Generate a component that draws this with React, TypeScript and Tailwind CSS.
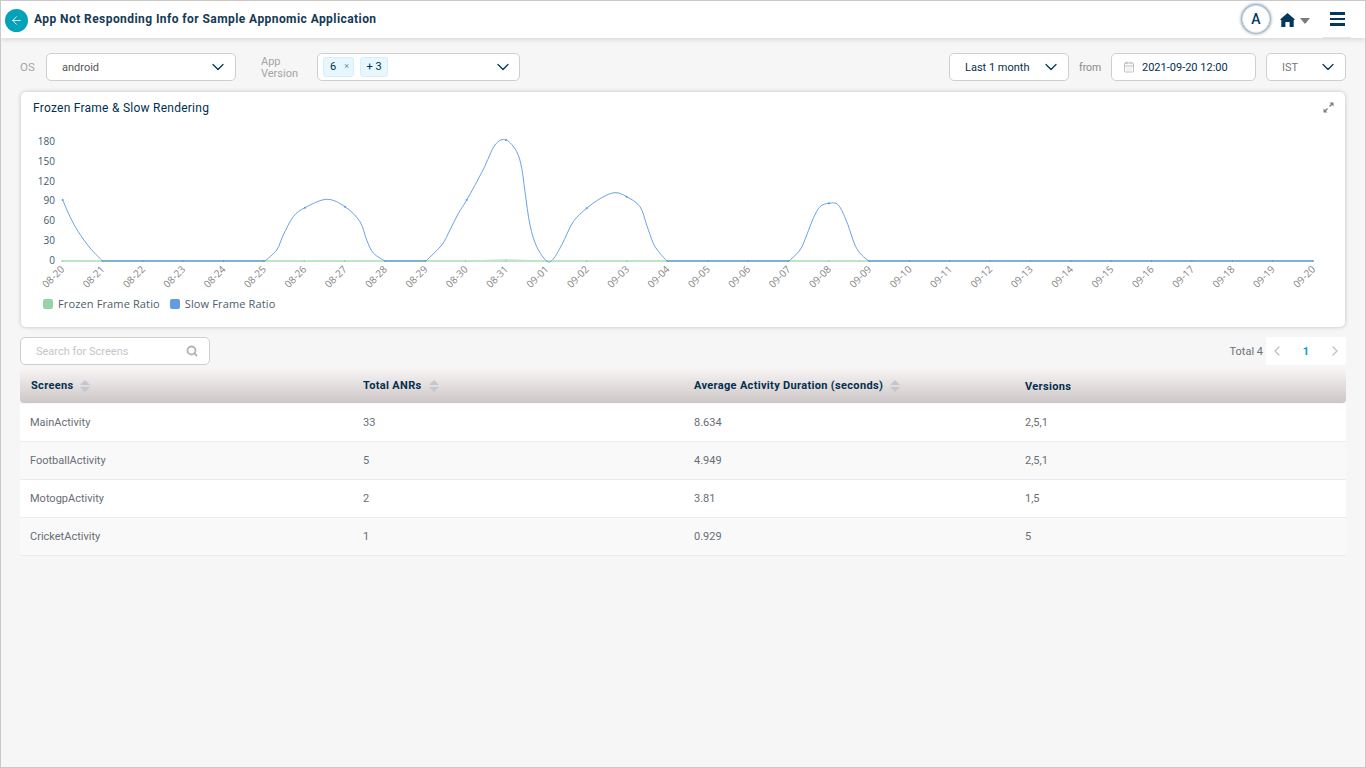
import { ChevronDown, ChevronLeft, ChevronRight, ArrowLeft, CalendarDays, Search } from "lucide-react";

const dates = ["08-20","08-21","08-22","08-23","08-24","08-25","08-26","08-27","08-28","08-29","08-30","08-31","09-01","09-02","09-03","09-04","09-05","09-06","09-07","09-08","09-09","09-10","09-11","09-12","09-13","09-14","09-15","09-16","09-17","09-18","09-19","09-20"];
const yTicks = [0, 30, 60, 90, 120, 150, 180];
const X0 = 62;
const STEP = (1313 - 62) / 31;

type P = [number, number];
function smooth(pts: P[]) {
  let d = `M${pts[0][0]} ${pts[0][1]}`;
  for (let i = 0; i < pts.length - 1; i++) {
    const p0 = pts[Math.max(i - 1, 0)];
    const p1 = pts[i];
    const p2 = pts[i + 1];
    const p3 = pts[Math.min(i + 2, pts.length - 1)];
    const c1x = p1[0] + (p2[0] - p0[0]) / 6;
    const c1y = p1[1] + (p2[1] - p0[1]) / 6;
    const c2x = p2[0] - (p3[0] - p1[0]) / 6;
    const c2y = p2[1] - (p3[1] - p1[1]) / 6;
    d += ` C${c1x.toFixed(1)} ${c1y.toFixed(1)} ${c2x.toFixed(1)} ${c2y.toFixed(1)} ${p2[0]} ${p2[1]}`;
  }
  return d;
}
const humps: P[][] = [
  [[62.7,200],[70,216.7],[78.3,231.7],[90,248],[102.7,261]],
  [[265,261],[276.7,250],[283.3,235],[293.3,216.7],[305,207.7],[326.7,199.3],[345,206.7],[360,221.7],[366.7,240],[373.3,253],[385,261]],
  [[426,261],[441.7,245],[450,230],[458,214],[466.7,200],[483,170],[495,145],[506,140],[516.7,151.7],[521.7,168],[525,191.7],[530,225],[536.7,246.7],[546.7,261],[553,259.3],[561.7,245],[573.3,221.7],[586.7,208.3],[601.7,197.7],[615,192.7],[626.7,196.7],[640,206.7],[646.7,225],[653.3,243.3],[660,253.3],[667,261]],
  [[789,261],[800,250],[806.7,235],[813.3,218.3],[820,206.7],[829,203.3],[838.3,205],[846.7,221.7],[855,245],[861.7,255],[869,261]],
];
const flats: [number, number][] = [[102.7,265],[385,426],[667,789],[869,1313]];
const dots: P[] = [[62.7,200],[305,207.7],[345,206.7],[466.7,200],[506,140],[586.7,208.3],[626.7,196.7],[829,203.3]];

function Chart() {
  return (
    <svg width="1324" height="170" viewBox="21 127 1324 170" className="block absolute left-0 top-[35px]">
      <line x1="62" x2="1313" y1="261" y2="261" stroke="#bfe5c8" strokeWidth="2" />
      <path d="M466 261 C485 261 490 260 506 260 C520 260 530 261 546 261" stroke="#bfe5c8" strokeWidth="1.5" fill="none" />
      {dates.map((_, i) => (
        <line key={i} x1={X0 + i * STEP} x2={X0 + i * STEP} y1="260" y2="262" stroke="#8fd0a3" strokeWidth="1" />
      ))}
      {flats.map(([a, b]) => (
        <line key={a} x1={a} x2={b} y1="261" y2="261" stroke="#7fb2d9" strokeWidth="2" />
      ))}
      {dates.map((_, i) => {
        const x = X0 + i * STEP;
        return flats.some(([a, b]) => x >= a - 1 && x <= b + 1) ? (
          <line key={i} x1={x} x2={x} y1="260" y2="262" stroke="#5c9ad8" strokeWidth="1" />
        ) : null;
      })}
      {humps.map((h, i) => (
        <path key={i} d={smooth(h)} fill="none" stroke="#6aa2e4" strokeWidth="1" />
      ))}
      {dots.map(([x, y]) => (
        <circle key={x} cx={x} cy={y} r="1" fill="#5c9ad8" />
      ))}
      {yTicks.map((t) => (
        <text key={t} x="55" y={263.5 - t * 0.658} textAnchor="end" fontSize="10" fill="#3c5a70" fontFamily="'Open Sans', sans-serif">{t}</text>
      ))}
      {dates.map((d, i) => {
        const x = X0 + i * STEP + 3;
        return (
          <text key={d} x={x} y="270" textAnchor="end" fontSize="10" fill="#858585" fontFamily="'Open Sans', sans-serif" transform={`rotate(-45 ${x} 270)`}>{d}</text>
        );
      })}
    </svg>
  );
}

function SortIcon() {
  return (
    <svg width="10" height="12" viewBox="0 0 10 12" className="ml-[7px]">
      <path d="M5 0 L10 5 H0 Z" fill="#c3c7d0" />
      <path d="M0 7 H10 L5 12 Z" fill="#c3c7d0" />
    </svg>
  );
}

const rows = [
  ["MainActivity", "33", "8.634", "2,5,1"],
  ["FootballActivity", "5", "4.949", "2,5,1"],
  ["MotogpActivity", "2", "3.81", "1,5"],
  ["CricketActivity", "1", "0.929", "5"],
];

const box = "h-7 bg-white border border-[#cfcfcf] rounded-[5px] flex items-center";

export default function App() {
  return (
    <div className="w-[1366px] h-[768px] bg-[#f6f6f6] border border-[#c9c9c9] overflow-hidden font-['Roboto',sans-serif] text-[#02304f] box-border">
      <header className="h-[37px] bg-white shadow-[0_2px_5px_rgba(0,0,0,0.12)] flex items-center relative pl-1">
        <div className="w-[23px] h-[23px] mt-[1px] rounded-full bg-[#00a3b8] flex items-center justify-center">
          <ArrowLeft size={13} color="#fff" strokeWidth={1.6} />
        </div>
        <h1 className="ml-[6px] text-xs font-bold tracking-[0.43px] text-[#153a55] leading-none -mt-[1px]">App Not Responding Info for Sample Appnomic Application</h1>
        <div className="ml-auto flex items-center">
          <div className="w-[28px] h-[28px] -mt-[2px] rounded-full bg-white border border-[#dfe6ea] shadow-[0_0_3px_1px_rgba(50,90,120,0.65)] flex items-center justify-center text-sm font-medium text-[#02385c]">A</div>
          <svg width="15" height="14" viewBox="0 0 15 14" className="ml-[10px] mt-[1px]"><path d="M7.5 0 L15 6.5 L13.7 7 V14 H9.6 V9 H5.4 V14 H1.3 V7 L0 6.5 Z" fill="#02385c" /></svg>
          <svg width="10" height="6" viewBox="0 0 10 6" className="ml-[5px] mt-[3px]"><path d="M0 0 H10 L5 6 Z" fill="#7a7a7a" /></svg>
          <div className="w-[28px] h-[37px] ml-[13px] mr-[14px] flex flex-col items-center justify-center gap-[3px] border-b border-[#e5e5e5]">
            <span className="w-[15px] h-[2.5px] bg-[#02385c]" />
            <span className="w-[15px] h-[2.5px] bg-[#02385c]" />
            <span className="w-[15px] h-[2.5px] bg-[#02385c]" />
          </div>
        </div>
      </header>

      <div className="flex items-center h-7 mt-[15px] mx-[19px] text-[11px]">
        <span className="text-[#a5a5a5] w-[26px] mt-[2px] text-[11.5px]">OS</span>
        <div className={`${box} w-[190px] pl-[15px] pr-[7px] justify-between`}>
          <span className="text-[#555] mt-[2px]">android</span>
          <ChevronDown size={20} color="#02385c" strokeWidth={1.5} />
        </div>
        <span className="text-[#a5a5a5] w-[56px] ml-[25px] leading-[12px] mt-[2px]">App<br />Version</span>
        <div className={`${box} w-[203px] pl-[5px] pr-[6px]`}>
          <span className="h-[20px] w-[31px] bg-[#e6f7fd] border border-[#d8eef6] rounded-[3px] flex items-center pl-[6px] text-[#02304f]">6<span className="ml-[8px] text-[#7c8a93] text-[9px]">×</span></span>
          <span className="h-[20px] w-[28px] ml-[6px] bg-[#e6f7fd] border border-[#d8eef6] rounded-[3px] flex items-center justify-center text-[#02304f]">+ 3</span>
          <ChevronDown size={20} color="#02385c" strokeWidth={1.5} className="ml-auto" />
        </div>
        <div className={`${box} w-[120px] pl-[15px] pr-[7px] justify-between ml-auto`}>
          <span className="text-[#02304f] mt-[2px]">Last 1 month</span>
          <ChevronDown size={20} color="#02385c" strokeWidth={1.5} />
        </div>
        <span className="text-[#8a8a8a] ml-[10px] w-[32px] mt-[2px] text-[10.5px]">from</span>
        <div className={`${box} w-[145px] pl-[11px]`}>
          <CalendarDays size={12} color="#a0a0a0" strokeWidth={1.3} />
          <span className="ml-[7px] text-[#02304f] mt-[2px]">2021-09-20 12:00</span>
        </div>
        <div className={`${box} w-[80px] ml-[10px] pl-[15px] pr-[7px] justify-between`}>
          <span className="text-[#777] mt-[2px]">IST</span>
          <ChevronDown size={20} color="#02385c" strokeWidth={1.5} />
        </div>
      </div>

      <section className="relative h-[235px] mt-[11px] mx-[20px] bg-white rounded-[5px] shadow-[0_0_4px_rgba(0,0,0,0.22)]">
        <h2 className="absolute left-[12px] top-[8px] text-xs tracking-[0.25px] text-[#02304f]">Frozen Frame &amp; Slow Rendering</h2>
        <svg width="11" height="11" viewBox="0 0 11 11" className="absolute right-[11px] top-[10px]">
          <path d="M6.5 0.5 H10.5 V4.5 L9 3 L7 5 L6 4 L8 2 Z" fill="#8a7a70" />
          <path d="M4.5 10.5 H0.5 V6.5 L2 8 L4 6 L5 7 L3 9 Z" fill="#8a7a70" />
        </svg>
        <Chart />
        <div className="absolute left-[22px] top-[204px] flex items-center text-[11px] text-[#4d5c68] tracking-[0.13px] font-['Open_Sans',sans-serif]">
          <span className="w-[10px] h-[10px] rounded-[2px] bg-[#98d3a8]" />
          <span className="ml-[5px]">Frozen Frame Ratio</span>
          <span className="w-[10px] h-[10px] rounded-[2px] bg-[#619de0] ml-[10px]" />
          <span className="ml-[5px]">Slow Frame Ratio</span>
        </div>
      </section>

      <div className="flex items-center h-7 mt-[10px] mx-[19px] text-[11px]">
        <div className={`${box} w-[190px] pl-[15px] pr-[11px] justify-between`}>
          <span className="text-[#c2c6cc] mt-[2px]">Search for Screens</span>
          <Search size={12} color="#b4b4b4" strokeWidth={3.6} />
        </div>
        <span className="ml-auto text-[#6b7379] mr-[3px] mt-[2px]">Total 4</span>
        <div className="w-[80px] h-7 bg-white rounded-[2px] flex items-center justify-between px-[3px]">
          <ChevronLeft size={16} color="#b9bfc5" strokeWidth={1.8} />
          <span className="text-[#00a3b8] font-bold mt-[2px]">1</span>
          <ChevronRight size={16} color="#b9bfc5" strokeWidth={1.8} />
        </div>
      </div>

      <div className="mx-[19px] mt-[4px] text-[11px]">
        <div className="grid grid-cols-[343px_331px_331px_321px] h-[34px] items-center rounded-[4px] bg-gradient-to-b from-[#f8f4f4] to-[#cdc6c7] font-bold text-[#02304f] tracking-[0.33px]">
          <div className="flex items-center pl-[11px]">Screens<SortIcon /></div>
          <div className="flex items-center">Total ANRs<SortIcon /></div>
          <div className="flex items-center">Average Activity Duration (seconds)<SortIcon /></div>
          <div className="flex items-center mt-[2px]">Versions</div>
        </div>
        <div className="mt-[1px]">
          {rows.map((r, i) => (
            <div key={r[0]} className={`grid grid-cols-[343px_331px_331px_321px] h-[38px] pt-[2px] items-center border-b border-[#e8edf3] text-[#686e74] ${i % 2 ? "bg-[#f9f9f9]" : "bg-white"}`}>
              <div className="pl-[10px]">{r[0]}</div>
              <div>{r[1]}</div>
              <div>{r[2]}</div>
              <div>{r[3]}</div>
            </div>
          ))}
        </div>
      </div>
    </div>
  );
}
